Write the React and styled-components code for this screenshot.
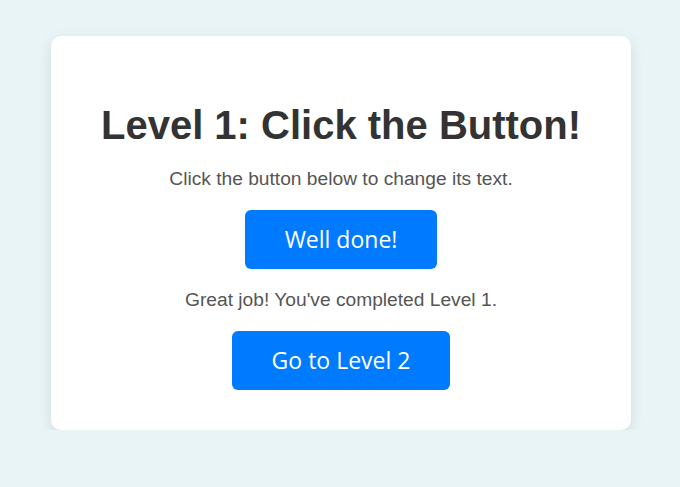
import React from "react";
import styled, { createGlobalStyle } from "styled-components";

const Global = createGlobalStyle`
  html, body { margin: 0; padding: 0; }
  body {
    background: #e8f4f5;
    font-family: "Liberation Sans", Arial, sans-serif;
  }
`;

const Page = styled.div`
  display: flex;
  justify-content: center;
  padding: 36px 0 0 2px;
`;

const Card = styled.div`
  width: 500px;
  padding: 40px;
  background: #ffffff;
  border-radius: 10px;
  box-shadow: 0 4px 14px rgba(0, 0, 0, 0.1);
  display: flex;
  flex-direction: column;
  align-items: center;
  gap: 20px;
  text-align: center;
`;

const Title = styled.h1`
  margin: 26px 0 0;
  font-size: 40px;
  font-weight: bold;
  color: #333333;
  line-height: 46px;
`;

const Text = styled.p`
  margin: 0;
  font-size: 19.2px;
  line-height: 22px;
  color: #555555;
`;

const Button = styled.button`
  border: none;
  border-radius: 6px;
  background: #007bff;
  color: #ffffff;
  font-family: "Open Sans", "Noto Sans", sans-serif;
  font-size: 23px;
  line-height: 29px;
  padding: 15px 40px;
  cursor: pointer;
`;

export default function App() {
  return (
    <>
      <Global />
      <Page>
        <Card>
          <Title>Level 1: Click the Button!</Title>
          <Text>Click the button below to change its text.</Text>
          <Button>Well done!</Button>
          <Text>Great job! You've completed Level 1.</Text>
          <Button>Go to Level 2</Button>
        </Card>
      </Page>
    </>
  );
}
